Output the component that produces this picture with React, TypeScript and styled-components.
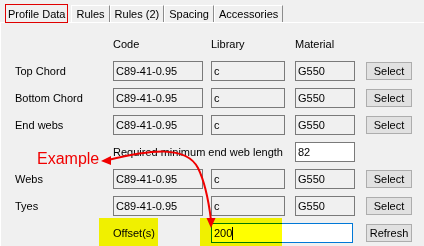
import React from 'react';
import styled, { createGlobalStyle } from 'styled-components';

const GlobalStyle = createGlobalStyle`
  html, body {
    margin: 0;
    padding: 0;
    background: #f0f0f0;
  }
  body {
    font-family: "Liberation Sans", Arial, sans-serif;
    font-size: 11px;
    color: #000;
  }
`;

const tabs = ['Profile Data', 'Rules', 'Rules (2)', 'Spacing', 'Accessories'];

const rows = [
  { label: 'Top Chord', code: 'C89-41-0.95', lib: 'c', mat: 'G550' },
  { label: 'Bottom Chord', code: 'C89-41-0.95', lib: 'c', mat: 'G550' },
  { label: 'End webs', code: 'C89-41-0.95', lib: 'c', mat: 'G550' },
];

const lowerRows = [
  { label: 'Webs', code: 'C89-41-0.95', lib: 'c', mat: 'G550' },
  { label: 'Tyes', code: 'C89-41-0.95', lib: 'c', mat: 'G550' },
];

const App = () => {
  const renderRow = (r: { label: string; code: string; lib: string; mat: string }) => (
    <React.Fragment key={r.label}>
      <Label>{r.label}</Label>
      <Field $width={90}>{r.code}</Field>
      <Field $width={74}>{r.lib}</Field>
      <Field $width={60}>{r.mat}</Field>
      <Button>Select</Button>
    </React.Fragment>
  );

  return (
    <>
      <GlobalStyle />
      <Window>
        <TabStrip>
          {tabs.map((t, i) => (
            <Tab key={t} $active={i === 0}>
              {t}
            </Tab>
          ))}
        </TabStrip>
        <Panel>
          <Grid>
            <span />
            <Head>Code</Head>
            <Head>Library</Head>
            <Head>Material</Head>
            <span />

            {rows.map(renderRow)}

            <span />
            <Note>Required minimum end web length</Note>
            <Field $width={60} $white>82</Field>
            <span />

            {lowerRows.map(renderRow)}

            <span />
            <Label>Offset(s)</Label>
            <Field $width={142} $white $focused $span={2}>
              200<Caret />
            </Field>
            <Button>Refresh</Button>
          </Grid>
        </Panel>

        <Highlight style={{ left: 99, top: 218, width: 59 }} />
        <Highlight style={{ left: 200, top: 218, width: 82 }} />

        <ExampleText>Example</ExampleText>
        <Arrow width="424" height="246" viewBox="0 0 424 246">
          <path
            d="M108 160 C150 150, 186 145, 198 168 C206 184, 209 204, 211 220"
            fill="none"
            stroke="#f00000"
            strokeWidth="2"
          />
          <polygon points="101,161 111,156 111,165" fill="#f00000" />
          <polygon points="211,228 206.5,218 215.5,218" fill="#f00000" />
        </Arrow>
      </Window>
    </>
  );
};

export default App;

const Window = styled.div`
  position: relative;
  width: 424px;
  height: 246px;
  overflow: hidden;
  background: #f0f0f0;
`;

const TabStrip = styled.div`
  display: flex;
  align-items: flex-end;
  height: 22px;
  padding-left: 5px;
  position: relative;
  z-index: 1;
`;

const Tab = styled.div<{ $active?: boolean }>`
  box-sizing: border-box;
  height: ${p => (p.$active ? '19px' : '17px')};
  margin-bottom: ${p => (p.$active ? '-1px' : '0')};
  margin-right: ${p => (p.$active ? '3px' : '0')};
  padding: 0 ${p => (p.$active ? '2px' : '4px')};
  display: flex;
  align-items: center;
  background: #f0f0f0;
  border: 1px solid;
  border-color: ${p => (p.$active ? '#e00000' : '#ffffff #8c8c8c transparent #ffffff')};
  border-bottom: ${p => (p.$active ? '1px solid #e00000' : 'none')};
  white-space: nowrap;
  font-size: 11px;
`;

const Panel = styled.div`
  box-sizing: border-box;
  height: 224px;
  border-top: 1px solid #ffffff;
  border-left: 1px solid #ffffff;
  padding: 11px 0 0 14px;
`;

const Grid = styled.div`
  display: grid;
  grid-template-columns: 98px 98px 84px 71px 46px;
  grid-auto-rows: 20px;
  row-gap: 7px;
  align-items: center;
`;

const Head = styled.div`
  font-size: 11px;
`;

const Label = styled.div`
  font-size: 11px;
  white-space: nowrap;
`;

const Note = styled.div`
  grid-column: span 2;
  font-size: 11px;
  white-space: nowrap;
`;

const Field = styled.div<{ $width: number; $white?: boolean; $focused?: boolean; $span?: number }>`
  box-sizing: border-box;
  width: ${p => p.$width}px;
  height: 20px;
  grid-column: ${p => (p.$span ? `span ${p.$span}` : 'auto')};
  display: flex;
  align-items: center;
  padding-left: 2px;
  border: 1px solid ${p => (p.$focused ? '#0078d7' : '#7a7a7a')};
  background: ${p => (p.$white ? '#ffffff' : '#f0f0f0')};
  font-size: 11px;
`;

const Caret = styled.span`
  display: inline-block;
  width: 1px;
  height: 13px;
  background: #000;
`;

const Button = styled.div`
  box-sizing: border-box;
  width: 46px;
  height: 18px;
  display: flex;
  align-items: center;
  justify-content: center;
  background: #e1e1e1;
  border: 1px solid #adadad;
  font-size: 11px;
`;

const Highlight = styled.div`
  position: absolute;
  height: 28px;
  background: #ffff00;
  mix-blend-mode: multiply;
  pointer-events: none;
`;

const ExampleText = styled.div`
  position: absolute;
  left: 37px;
  top: 150px;
  color: #f00000;
  font-size: 16px;
  line-height: 18px;
`;

const Arrow = styled.svg`
  position: absolute;
  left: 0;
  top: 0;
  pointer-events: none;
`;
